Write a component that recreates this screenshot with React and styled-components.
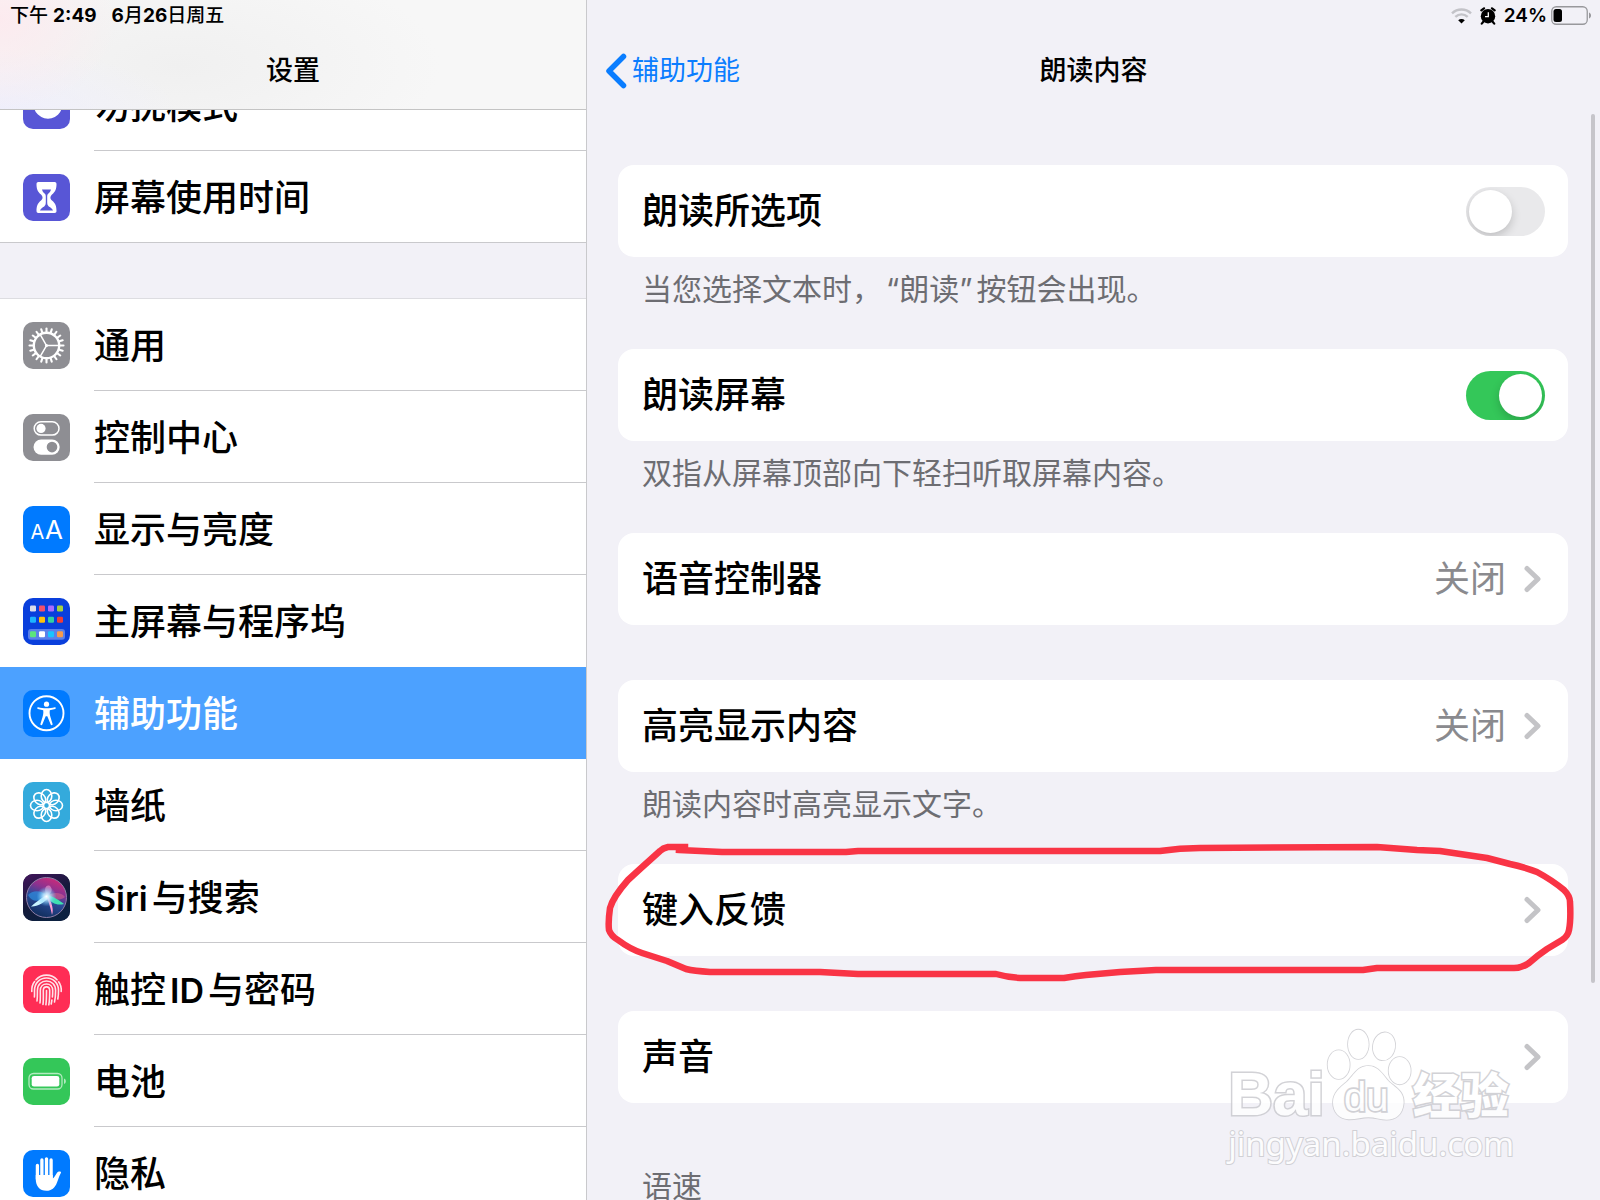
import React from "react";
import styled, { createGlobalStyle } from "styled-components";

const colors = {
  page: "#f2f1f7",
  line: "#c9c9cc",
  label: "#000000",
  secondary: "#8a8a8e",
  footnote: "#6d6d72",
  tint: "#0a7dff",
  selected: "#4ca1ff",
  chevron: "#c4c4c7",
};

const GlobalStyle = createGlobalStyle`
  * { box-sizing: border-box; }
  html, body { margin: 0; padding: 0; }
  body {
    background: ${colors.page};
    color: ${colors.label};
    font-family: Inter, "Noto Sans CJK SC", sans-serif;
    overflow: hidden;
  }
  h1, h2, h3, p, ul { margin: 0; padding: 0; }
  a { color: inherit; text-decoration: none; }
`;

const Screen = styled.div`
  display: grid;
  grid-template-columns: minmax(0, 587fr) minmax(0, 1013fr);
  height: 100vh;
  overflow: hidden;
`;

/* ---------- Shared bars ---------- */

const StatusBar = styled.div`
  display: flex;
  align-items: center;
  justify-content: ${(p) => (p.$end ? "flex-end" : "flex-start")};
  gap: ${(p) => (p.$end ? 8 : 15)}px;
  height: 31px;
  padding: 0 8px 0 10px;
  font-size: 19px;
  font-weight: 500;
  line-height: 31px;
  white-space: nowrap;

  svg { display: block; }
`;

const StatusDigits = styled.b`
  font-weight: ${(p) => (p.$wide ? 700 : 600)};
`;

const BatteryGroup = styled.span`
  display: flex;
  align-items: center;
  gap: 4px;
`;

const NavTitle = styled.h1`
  font-size: 27px;
  font-weight: 500;
  line-height: 80px;
  text-align: center;
`;

/* ---------- Sidebar ---------- */

const Sidebar = styled.nav`
  display: flex;
  flex-direction: column;
  overflow: hidden;
  background: #fff;
  border-right: 1px solid ${colors.line};
`;

const SidebarHeader = styled.header`
  position: relative;
  z-index: 1;
  flex: none;
  height: 110px;
  border-bottom: 1px solid #c4c4c4;
  background:
    radial-gradient(ellipse 120px 90px at 0 20px, rgba(255, 230, 236, 0.7), transparent),
    radial-gradient(ellipse 180px 60px at 0 100%, rgba(238, 238, 252, 0.9), transparent),
    radial-gradient(ellipse 260px 110px at 180px 60%, #f0f0f0, transparent),
    #f7f7f7;
`;

const SidebarList = styled.div`
  margin-top: -51px;
`;

const Group = styled.ul`
  list-style: none;
`;

const GroupGap = styled.div`
  height: 56px;
  background: ${colors.page};
  border-bottom: 1px solid #dddde1;
`;

const SidebarLink = styled.a`
  display: flex;
  align-items: center;
  gap: 24px;
  height: 92px;
  padding-left: 23px;
  background: ${(p) => (p.$selected ? colors.selected : "#fff")};
  color: ${(p) => (p.$selected ? "#fff" : colors.label)};
  box-shadow: ${(p) => (p.$last ? `inset 0 -1px ${colors.line}` : "none")};
`;

const IconTile = styled.span`
  flex: none;
  width: 47px;
  height: 47px;
  border-radius: 10px;
  overflow: hidden;
  background: ${(p) => p.$color};

  svg { display: block; width: 47px; height: 47px; }
`;

const SidebarLabel = styled.span`
  flex: 1;
  height: 92px;
  font-size: 36px;
  font-weight: 500;
  line-height: 94px;
  white-space: nowrap;
  border-bottom: 1px solid ${(p) => (p.$divided ? colors.line : "transparent")};
`;

const Latin = styled.span`
  margin-left: ${(p) => (p.$lead ? 0 : 4)}px;
  margin-right: 4px;
  font-size: 34px;
  font-weight: 600;
`;

/* ---------- Detail pane ---------- */

const Detail = styled.main`
  position: relative;
  display: flex;
  flex-direction: column;
  overflow: hidden;
  background: ${colors.page};
`;

const DetailHeader = styled.header`
  flex: none;
  height: 110px;
`;

const NavRow = styled.div`
  display: grid;
  grid-template-columns: 1fr auto 1fr;
  align-items: center;
  height: 80px;
  padding: 0 18px;
`;

const BackLink = styled.a`
  display: flex;
  align-items: center;
  gap: 5px;
  color: ${colors.tint};
  font-size: 27px;
  line-height: 80px;

  svg { display: block; }
`;

const Content = styled.div`
  flex: none;
  padding: 55px 32px 0 31px;
`;

const Section = styled.section`
  position: relative;
`;

const Card = styled.div`
  display: flex;
  align-items: center;
  height: 92px;
  padding: 0 ${(p) => (p.$toggle ? 23 : 27)}px 0 24px;
  border-radius: 16px;
  background: #fff;
  font-size: 36px;
  font-weight: 500;
  line-height: 94px;
`;

const CardTitle = styled.span`
  flex: 1;
`;

const CardValue = styled.span`
  margin-right: 18px;
  color: ${colors.secondary};
  font-weight: 400;
`;

const Footnote = styled.p`
  height: 92px;
  padding: 9px 24px 0;
  color: ${colors.footnote};
  font-size: 30px;
  line-height: 46px;
  white-space: nowrap;
`;

const Quoted = styled.q`
  quotes: none;
  padding: 0 4px;
`;

const SectionSpace = styled.div`
  height: 55px;
`;

const SectionHeading = styled.h2`
  padding: 60px 24px 0;
  color: ${colors.footnote};
  font-size: 30px;
  font-weight: 400;
  line-height: 46px;
`;

const Switch = styled.input`
  appearance: none;
  display: flex;
  align-items: center;
  flex: none;
  width: 79px;
  height: 49px;
  margin: 0;
  padding: 0 3px;
  border-radius: 25px;
  background: #e9e9eb;
  overflow: hidden;

  &::before {
    content: "";
    width: 43px;
    height: 43px;
    border-radius: 50%;
    background: #fff;
    box-shadow: 0 4px 10px rgba(0, 0, 0, 0.18);
  }

  &:checked {
    justify-content: flex-end;
    background: #34c759;
  }
`;

const ScrollThumb = styled.div`
  position: absolute;
  top: 114px;
  right: 5px;
  bottom: 217px;
  width: 4px;
  border-radius: 2px;
  background: #c6c5ca;
`;

const InkCircle = styled.svg`
  position: absolute;
  top: -24px;
  left: -18px;
  width: calc(100% + 30px);
  height: 145px;
  pointer-events: none;
`;

/* ---------- Watermark ---------- */

const Watermark = styled.div`
  position: absolute;
  right: 86px;
  bottom: 34px;
  display: flex;
  flex-direction: column;
  color: #fff;
  opacity: 0.8;
  pointer-events: none;
  -webkit-text-stroke: 3px #c8c8cd;
  paint-order: stroke fill;
`;

const WatermarkLogo = styled.div`
  display: flex;
  align-items: flex-end;
  height: 96px;
  font-family: "Liberation Sans", "Noto Sans CJK SC", sans-serif;
  font-size: 62px;
  font-weight: 700;
  line-height: 56px;

  svg { display: block; flex: none; }
`;

const WatermarkCjk = styled.span`
  font-size: 48px;
  font-weight: 900;
  line-height: 50px;
`;

const WatermarkUrl = styled.div`
  font-family: "Noto Sans", "Open Sans", sans-serif;
  font-size: 33px;
  line-height: 44px;
  -webkit-text-stroke-width: 2px;
`;

/* ---------- Icons ---------- */

const polar = (r, deg) => {
  const a = (deg * Math.PI) / 180;
  return [23.5 + r * Math.cos(a), 23.5 + r * Math.sin(a)];
};

const MoonIcon = () => (
  <svg viewBox="0 0 47 47">
    <path fill="#fff" d="M20 8.500A14.500 14.500 0 1 0 38.800 26.500A17 17 0 0 1 20 8.500z" />
    <circle cx="24.500" cy="22" r="12" fill="#fff" />
    <path fill="#fff" d="M12 24h26a14 13 0 0 1-26 3z" />
  </svg>
);

const HourglassIcon = () => (
  <svg viewBox="0 0 47 47">
    <path
      fill="#fff"
      d="M15.5 8h16c1.400 0 2 .8 2 2 0 5-1 7.500-4.500 10.500-1.800 1.600-2.300 4.400 0 6 3.500 3 4.500 5.500 4.500 10.500 0 1.200-.6 2-2 2h-16c-1.400 0-2-.8-2-2 0-5 1-7.500 4.500-10.500 2.300-1.600 1.800-4.400 0-6C14.500 17.500 13.500 15 13.500 10c0-1.200.6-2 2-2z"
    />
    <path
      fill="#5856d6"
      d="M19 15.500h9c-.5 2-1.300 3-2.800 4.300-.8.7-1 1.500-1 3v5c0 2.500.4 3.700 1.600 4.600 1.800 1.200 3.500 2 4.200 4.100H17c.7-2.100 2.400-2.900 4.200-4.100 1.200-.9 1.600-2.100 1.600-4.600v-5c0-1.500-.2-2.300-1-3-1.500-1.300-2.300-2.300-2.800-4.300z"
    />
  </svg>
);

const GearIcon = () => (
  <svg viewBox="0 0 47 47" fill="none" stroke="#fff" strokeLinecap="round">
    <circle cx="23.5" cy="23.5" r="12.700" strokeWidth="2.400" />
    {Array.from({ length: 20 }, (_, i) => {
      const [x1, y1] = polar(13.5, i * 18);
      const [x2, y2] = polar(17, i * 18);
      return <line key={i} x1={x1} y1={y1} x2={x2} y2={y2} strokeWidth="2.100" />;
    })}
    {[0, 120, 240].map((d) => {
      const [x, y] = polar(12.5, d);
      return <line key={d} x1="23.5" y1="23.5" x2={x} y2={y} strokeWidth="1.500" />;
    })}
    <circle cx="23.5" cy="23.5" r="1.500" fill="#fff" stroke="none" />
  </svg>
);

const ControlIcon = () => (
  <svg viewBox="0 0 47 47">
    <rect x="11.2" y="7.7" width="24.800" height="13.400" rx="6.700" fill="none" stroke="#fff" strokeWidth="1.500" />
    <circle cx="18" cy="14.400" r="4.600" fill="#fff" />
    <rect x="10.500" y="25.500" width="26.200" height="15.200" rx="7.600" fill="#fff" />
    <circle cx="29" cy="33.100" r="5.300" fill="#8e8e93" />
  </svg>
);

const TextSizeIcon = () => (
  <svg viewBox="0 0 47 47" fill="#fff" fontFamily="Inter, sans-serif" fontWeight="400">
    <text x="7.500" y="33" fontSize="20">A</text>
    <text x="22" y="33" fontSize="26">A</text>
  </svg>
);

const homeTiles = [
  [10, 10.5, "#dcdcea"], [19, 10.5, "#f2506c"], [28, 10.5, "#a96cff"], [37, 10.5, "#a6d23f"],
  [10, 21.7, "#1cb4ff"], [19, 21.7, "#ffc20a"], [28, 21.7, "#30d2a2"], [37, 21.7, "#f23c34"],
  [10, 36.3, "#5ce67c"], [19, 36.3, "#ffffff"], [28, 36.3, "#18c4ff"], [37, 36.3, "#f79a4c"],
];

const HomeIcon = () => (
  <svg viewBox="0 0 47 47">
    <rect x="5" y="31" width="37" height="10.700" rx="3" fill="#5a80ea" />
    {homeTiles.map(([x, y, c]) => (
      <rect key={`${x}-${y}`} x={x - 3} y={y - 3} width="6" height="6" rx="1.200" fill={c} />
    ))}
  </svg>
);

const AccessibilityIcon = () => (
  <svg viewBox="0 0 47 47" fill="none" stroke="#fff" strokeLinecap="round" strokeLinejoin="round">
    <circle cx="23.5" cy="23.200" r="17" strokeWidth="1.900" />
    <circle cx="23.5" cy="14.200" r="2.600" fill="#fff" stroke="none" />
    <path fill="#fff" stroke="none" d="M15.200 17.200c2.600.7 5.200 1 8.300 1s5.700-.3 8.300-1c1.200-.2 1.400 1.400.3 1.700l-5.300 1.300c-.4 2.700.1 5 .8 7.300l2 6.500c.3 1.200-1.400 1.700-1.900.5l-3.400-8.300h-1.600l-3.400 8.300c-.5 1.200-2.200.7-1.900-.5l2-6.500c.7-2.300 1.200-4.600.8-7.300l-5.300-1.300c-1.100-.3-.9-1.900.3-1.700z" />
  </svg>
);

const WallpaperIcon = () => (
  <svg viewBox="0 0 47 47" fill="none" stroke="#fff" strokeWidth="1.600">
    {Array.from({ length: 8 }, (_, i) => (
      <ellipse key={i} cx="23.5" cy="14" rx="5.300" ry="6.500" transform={`rotate(${i * 45} 23.5 23.5)`} />
    ))}
    <circle cx="23.5" cy="23.5" r="3.200" />
  </svg>
);

const SiriIcon = () => (
  <svg viewBox="0 0 47 47">
    <defs>
      <linearGradient id="siriBack" x1="0" y1="0" x2="0.500" y2="1">
        <stop offset="0" stopColor="#43145c" />
        <stop offset="0.600" stopColor="#141a3a" />
        <stop offset="1" stopColor="#0c2140" />
      </linearGradient>
      <linearGradient id="siriOrb" x1="0.700" y1="0" x2="0.300" y2="1">
        <stop offset="0" stopColor="#d02a78" />
        <stop offset="0.300" stopColor="#8b3290" />
        <stop offset="0.550" stopColor="#2a4a98" />
        <stop offset="1" stopColor="#0f2c58" />
      </linearGradient>
      <radialGradient id="siriGlow">
        <stop offset="0" stopColor="#fff" />
        <stop offset="0.350" stopColor="#bfeaff" stopOpacity="0.850" />
        <stop offset="1" stopColor="#5ac8ff" stopOpacity="0" />
      </radialGradient>
    </defs>
    <rect width="47" height="47" fill="url(#siriBack)" />
    <circle cx="23.5" cy="23.5" r="20" fill="url(#siriOrb)" stroke="#8f7fa8" strokeWidth="1" />
    <path d="M24 22C31 17 39 19 42 23C37 27 29 26 24 22z" fill="#c8588f" opacity="0.700" />
    <path d="M24 22C17 15 9 17 5 21C10 30 18 27 24 22z" fill="#2f8fe0" opacity="0.700" />
    <path d="M24 22C20 15 23 10 27 12C30 15 29 19 24 22z" fill="#e18cc8" opacity="0.700" />
    <path d="M24 21C30 22 37 27 41 30C34 32 28 29 24 23z" fill="#3fe0b0" />
    <path d="M24 21C18 24 11 30 8 32.500C14 33 21 29 25 24z" fill="#c9f4ff" />
    <path d="M23 22C26 28 28 36 29 41C31 36 29 29 25 22z" fill="#ff9ad2" />
    <circle cx="23.5" cy="22.500" r="10" fill="url(#siriGlow)" />
  </svg>
);

const FingerprintIcon = () => (
  <svg viewBox="0 0 47 47" fill="none" stroke="#ffe3e9" strokeWidth="1.600" strokeLinecap="round">
    <path d="M13 13.800C18.500 7.600 28.500 7.600 34 13.800" />
    <path d="M8.800 25.500C8.600 21 9.600 18 11.600 15.600M35.600 15.800C37.700 18.500 38.500 21.500 38.200 25.500" />
    <path d="M11.400 31C11.600 29 11.500 27 11.500 24.500C11.500 17 17 12 23.500 12S35.500 17 35.500 24.500C35.500 28 35.300 30.500 34.800 33" />
    <path d="M14 35C14.500 31.500 14.400 28 14.400 24.500C14.400 18.500 18.500 15 23.500 15S32.600 18.500 32.600 24.500C32.600 29 32.300 32.500 31.500 36" />
    <path d="M17 37C17.500 33 17.300 28.500 17.300 24.500C17.300 20.500 20 18 23.500 18S29.700 20.500 29.700 24.500C29.700 27 29.700 29 29.400 31M28.900 34L28.200 38" />
    <path d="M20 38.500C20.600 34 20.300 28.500 20.300 24.500C20.300 22.300 21.600 20.900 23.500 20.900S26.700 22.300 26.700 24.500C26.700 29.500 26.700 34 25.800 38.800" />
    <path d="M23.500 24.500C23.500 30 23.500 34.500 22.900 38.800" />
  </svg>
);

const BatteryTileIcon = () => (
  <svg viewBox="0 0 47 47">
    <rect x="6" y="15.500" width="33" height="15.500" rx="4.500" fill="none" stroke="#b3eac0" strokeWidth="1.300" />
    <rect x="8.700" y="18" width="27.600" height="10.500" rx="2.300" fill="#fff" />
    <path d="M41 20.500c2.500.8 2.500 4.700 0 5.500z" fill="#b3eac0" />
  </svg>
);

const HandIcon = () => (
  <svg viewBox="0 0 47 47" fill="none" stroke="#fff" strokeWidth="3.300" strokeLinecap="round">
    <path d="M14.400 15.500V29M18.900 10V28M23.500 8.800V28M28.100 10V28" />
    <path
      fill="#fff"
      stroke="none"
      d="M12.750 25H29.750V28.500C31.500 27.500 32.500 25 34 22.800C35.300 21.100 38.300 21.300 38 22.800C36.500 25.500 35.500 28.500 34 32.500C32 38 28.500 40.800 23.500 40.800C16.500 40.800 12.750 36 12.750 29z"
    />
  </svg>
);

const Chevron = () => (
  <svg width="17" height="28" viewBox="0 0 17 28" fill="none" stroke={colors.chevron} strokeWidth="5" strokeLinecap="round" strokeLinejoin="round" aria-hidden="true">
    <path d="M3 3.500L14 14L3 24.500" />
  </svg>
);

const BackChevron = () => (
  <svg width="22" height="36" viewBox="0 0 22 36" fill="none" stroke={colors.tint} strokeWidth="5.500" strokeLinecap="round" strokeLinejoin="round" aria-hidden="true">
    <path d="M18.500 3.500L4 18L18.500 32.500" />
  </svg>
);

const WifiIcon = () => (
  <svg width="21" height="16" viewBox="0 0 21 16" fill="none" stroke="#c3c3c8" strokeWidth="2.500">
    <path d="M1 5.400C6.500.3 14.500.3 20 5.400" />
    <path d="M4.300 8.900C8 5.600 13 5.600 16.700 8.900" />
    <path d="M10.500 15.600L7.200 12.300C9 10.600 12 10.600 13.800 12.300z" fill="#000" stroke="none" />
  </svg>
);

const AlarmIcon = () => (
  <svg width="16" height="18" viewBox="0 0 16 18">
    <circle cx="8" cy="9.200" r="7.200" fill="#000" />
    <path d="M1.300 3.400L4 1.300M14.700 3.400L12 1.300M3.500 14.500L1.800 16.600M12.500 14.500L14.200 16.600" stroke="#000" strokeWidth="2.200" strokeLinecap="round" />
    <path d="M8.300 5.200V9.600H5" fill="none" stroke="#fff" strokeWidth="1.300" />
  </svg>
);

const BatteryIcon = () => (
  <svg width="41" height="19" viewBox="0 0 41 19">
    <rect x="0.750" y="0.750" width="35.500" height="17.500" rx="4.500" fill="none" stroke="#98989c" strokeWidth="1.300" />
    <rect x="2.500" y="3" width="8.500" height="13" rx="2.500" fill="#000" />
    <path d="M38 6.500c2.700.8 2.700 5.200 0 6z" fill="#98989c" />
  </svg>
);

const Paw = () => (
  <svg width="88" height="95" viewBox="370 80 264 285" fill="#fff" stroke="#c8c8cd" strokeWidth="5">
    <ellipse cx="411" cy="193" rx="33" ry="43" />
    <ellipse cx="470" cy="132" rx="31" ry="44" />
    <ellipse cx="547" cy="138" rx="33" ry="42" transform="rotate(10 547 138)" />
    <ellipse cx="594" cy="211" rx="33" ry="41" />
    <path d="M500 197C530 197 542 222 560 242C580 262 608 272 606 308C603 345 580 358 555 358C535 358 520 351 500 351C480 351 462 358 440 357C412 355 394 335 394 306C394 278 415 262 434 246C455 228 465 197 500 197z" />
    <text x="427" y="331" fontFamily="Liberation Sans, sans-serif" fontSize="120" fontWeight="400" strokeWidth="10" style={{ WebkitTextStroke: "0" }}>du</text>
  </svg>
);

/* ---------- Data ---------- */

const topItems = [
  { label: "勿扰模式", color: "#5856d6", Icon: MoonIcon },
  { label: "屏幕使用时间", color: "#5856d6", Icon: HourglassIcon },
];

const mainItems = [
  { label: "通用", color: "#8e8e93", Icon: GearIcon },
  { label: "控制中心", color: "#8e8e93", Icon: ControlIcon },
  { label: "显示与亮度", color: "#007aff", Icon: TextSizeIcon },
  { label: "主屏幕与程序坞", color: "#0a3fdc", Icon: HomeIcon },
  { label: "辅助功能", color: "#007aff", Icon: AccessibilityIcon, selected: true },
  { label: "墙纸", color: "#34aadc", Icon: WallpaperIcon },
  { label: <><Latin $lead>Siri</Latin>与搜索</>, key: "siri", color: "#141a3a", Icon: SiriIcon },
  { label: <>触控<Latin>ID</Latin>与密码</>, key: "touch", color: "#ff2d55", Icon: FingerprintIcon },
  { label: "电池", color: "#34c759", Icon: BatteryTileIcon },
  { label: "隐私", color: "#007aff", Icon: HandIcon },
];

function SidebarGroup({ items }) {
  return (
    <Group>
      {items.map(({ label, key, color, Icon, selected }, i) => {
        const last = i === items.length - 1;
        const beforeSelected = !last && items[i + 1].selected;
        return (
          <li key={key || label}>
            <SidebarLink href="#" $selected={selected} $last={last} aria-current={selected ? "page" : undefined}>
              <IconTile $color={color} aria-hidden="true"><Icon /></IconTile>
              <SidebarLabel $divided={!last && !selected && !beforeSelected}>{label}</SidebarLabel>
            </SidebarLink>
          </li>
        );
      })}
    </Group>
  );
}

function ToggleCard({ id, title, checked }) {
  return (
    <Card as="label" htmlFor={id} $toggle>
      <CardTitle>{title}</CardTitle>
      <Switch id={id} type="checkbox" role="switch" defaultChecked={checked} />
    </Card>
  );
}

function LinkCard({ title, value }) {
  return (
    <Card as="a" href="#">
      <CardTitle>{title}</CardTitle>
      {value && <CardValue>{value}</CardValue>}
      <Chevron />
    </Card>
  );
}

export default function App() {
  return (
    <>
      <GlobalStyle />
      <Screen>
        <Sidebar>
          <SidebarHeader>
            <StatusBar>
              <span>下午 <StatusDigits $wide>2:49</StatusDigits></span>
              <span>
                <StatusDigits $wide>6</StatusDigits>月<StatusDigits $wide>26</StatusDigits>日周五
              </span>
            </StatusBar>
            <NavTitle>设置</NavTitle>
          </SidebarHeader>
          <SidebarList>
            <SidebarGroup items={topItems} />
            <GroupGap />
            <SidebarGroup items={mainItems} />
          </SidebarList>
        </Sidebar>

        <Detail>
          <DetailHeader>
            <StatusBar $end>
              <WifiIcon />
              <AlarmIcon />
              <BatteryGroup>
                <StatusDigits>24%</StatusDigits>
                <BatteryIcon />
              </BatteryGroup>
            </StatusBar>
            <NavRow>
              <BackLink href="#"><BackChevron />辅助功能</BackLink>
              <NavTitle as="h2">朗读内容</NavTitle>
            </NavRow>
          </DetailHeader>

          <Content>
            <Section>
              <ToggleCard id="speak-selection" title="朗读所选项" />
              <Footnote>当您选择文本时，<Quoted>“朗读”</Quoted>按钮会出现。</Footnote>
            </Section>
            <Section>
              <ToggleCard id="speak-screen" title="朗读屏幕" checked />
              <Footnote>双指从屏幕顶部向下轻扫听取屏幕内容。</Footnote>
            </Section>
            <Section>
              <LinkCard title="语音控制器" value="关闭" />
              <SectionSpace />
            </Section>
            <Section>
              <LinkCard title="高亮显示内容" value="关闭" />
              <Footnote>朗读内容时高亮显示文字。</Footnote>
            </Section>
            <Section>
              <LinkCard title="键入反馈" />
              <SectionSpace />
              <InkCircle viewBox="600 840 980 145" preserveAspectRatio="none" fill="none" stroke="#f93445" strokeWidth="6.500" strokeLinecap="square" strokeLinejoin="round" aria-hidden="true">
                <path d="M685 847L668 847Q663 848 660 851L640 869L628 880Q613 897 610 908Q608 922 609 930Q611 936 618 940Q630 949 642 953L667 961L686 969Q694 971 710 972L820 972L858 974L996 974Q1010 978 1024 978L1064 978Q1076 976 1086 975L1120 972L1156 970L1363 970L1377 968L1514 968Q1522 968 1529 963Q1538 955 1547 949L1562 940Q1568 936 1569 930Q1571 920 1570 902Q1570 896 1564 890Q1552 880 1537 872Q1524 867 1510 864L1487 858L1440 851L1417 850L1377 847L1200 848Q1180 848 1160 851L858 851L846 852L722 852Q700 851 679 850" />
              </InkCircle>
            </Section>
            <Section>
              <LinkCard title="声音" />
            </Section>
            <SectionHeading>语速</SectionHeading>
          </Content>

          <ScrollThumb />

          <Watermark>
            <WatermarkLogo>
              <span>Bai</span>
              <Paw />
              <WatermarkCjk>经验</WatermarkCjk>
            </WatermarkLogo>
            <WatermarkUrl>jingyan.baidu.com</WatermarkUrl>
          </Watermark>
        </Detail>
      </Screen>
    </>
  );
}
